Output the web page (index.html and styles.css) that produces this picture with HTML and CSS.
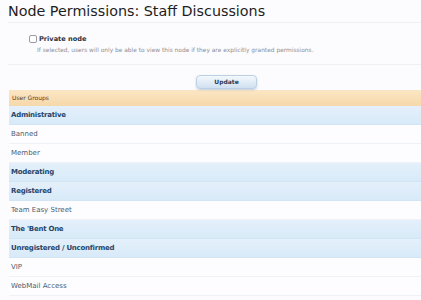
FILE: index.html
```html
<!DOCTYPE html>
<html>
<head>
<meta charset="utf-8">
<link rel="stylesheet" href="styles.css">
</head>
<body>
<h1 class="title">Node Permissions: Staff Discussions</h1>
<div class="option">
  <label class="check"><span class="box"></span><span class="check-label">Private node</span></label>
  <p class="desc">If selected, users will only be able to view this node if they are explicitly granted permissions.</p>
</div>
<div class="submit-row">
  <button class="btn">Update</button>
</div>
<div class="groups">
  <div class="groups-head">User Groups</div>
  <div class="row primary">Administrative</div>
  <div class="row">Banned</div>
  <div class="row">Member</div>
  <div class="row primary">Moderating</div>
  <div class="row primary">Registered</div>
  <div class="row">Team Easy Street</div>
  <div class="row primary">The 'Bent One</div>
  <div class="row primary">Unregistered / Unconfirmed</div>
  <div class="row">VIP</div>
  <div class="row">WebMail Access</div>
</div>
</body>
</html>
```
FILE: styles.css
```css
html, body {
  margin: 0;
  padding: 0;
  background: #fcfcfe;
  font-family: "DejaVu Sans", Verdana, sans-serif;
  overflow: hidden;
}
body {
  padding-left: 8px;
}
.title {
  margin: 0;
  padding-top: 3px;
  height: 19px;
  font-size: 14.3px;
  font-weight: normal;
  color: #1e1e22;
  line-height: 17px;
  border-bottom: 1px solid #eef0f4;
}
.option {
  padding-left: 21px;
  padding-top: 11px;
  height: 30px;
  border-bottom: 1px solid #eef0f4;
}
.check {
  display: flex;
  align-items: center;
  gap: 2px;
  height: 9px;
}
.box {
  width: 6px;
  height: 6px;
  border: 1px solid #9a9ca2;
  border-radius: 2px;
  background: #fff;
}
.check-label {
  font-size: 6.6px;
  font-weight: bold;
  color: #2e3440;
}
.desc {
  margin: 4px 0 0 8px;
  font-size: 5.9px;
  color: #8a8e96;
}
.submit-row {
  padding: 4px 0 0 188px;
  height: 20px;
}
.btn {
  width: 61px;
  height: 14px;
  border: 1px solid #bcd0e4;
  border-radius: 4px;
  background: linear-gradient(#f4f8fd, #cfe0f0);
  box-shadow: 0 1px 2px rgba(110,135,170,0.4);
  font-family: "DejaVu Sans", Verdana, sans-serif;
  font-size: 6px;
  font-weight: bold;
  color: #2a3a55;
  padding: 0;
}
.groups {
  margin-top: 1px;
  margin-left: 1px;
}
.groups-head {
  height: 16px;
  line-height: 16px;
  padding-left: 3px;
  background: linear-gradient(#fbe6c4, #f6d8aa);
  font-size: 6px;
  color: #4a3c28;
}
.row {
  height: 18px;
  line-height: 18px;
  padding-left: 2px;
  font-size: 7px;
  color: #4b5a70;
  background: #fdfdff;
  border-bottom: 1px solid #eef1f6;
}
.row.primary {
  font-weight: bold;
  letter-spacing: -0.25px;
  color: #27456a;
  background: linear-gradient(#e4f0fb, #d8eaf8);
  border-bottom-color: #d2e5f5;
}
```
